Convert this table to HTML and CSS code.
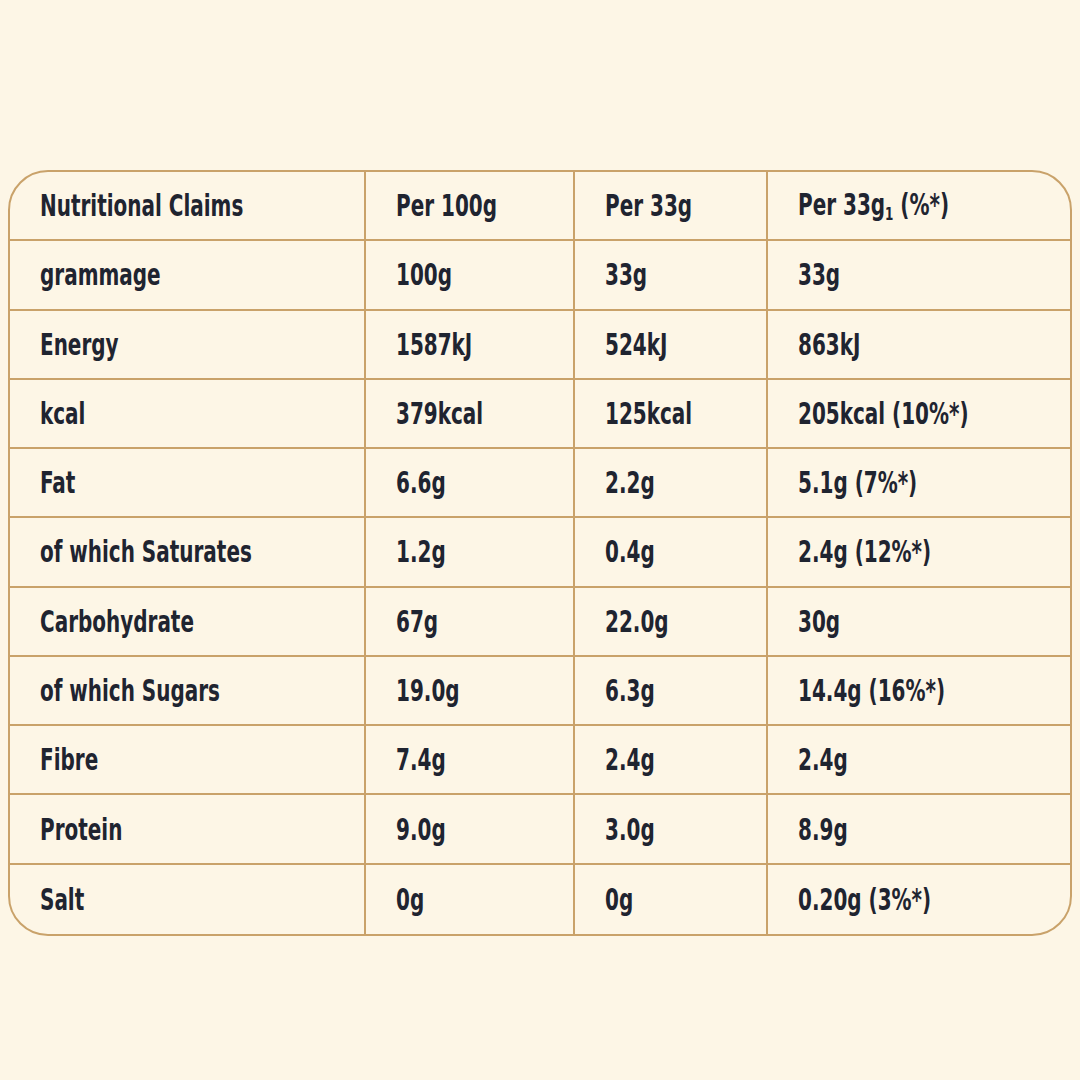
FILE: index.html
```html
<!DOCTYPE html>
<html>
<head>
<meta charset="utf-8">
<link rel="stylesheet" href="styles.css">
</head>
<body>
<div class="page">
  <div class="table">
    <div class="cell"><span class="t">Nutritional Claims</span></div><div class="cell"><span class="t">Per 100g</span></div><div class="cell"><span class="t">Per 33g</span></div><div class="cell"><span class="t">Per 33g<sub>1</sub> (%*)</span></div>
    <div class="cell"><span class="t">grammage</span></div><div class="cell"><span class="t">100g</span></div><div class="cell"><span class="t">33g</span></div><div class="cell"><span class="t">33g</span></div>
    <div class="cell"><span class="t">Energy</span></div><div class="cell"><span class="t">1587kJ</span></div><div class="cell"><span class="t">524kJ</span></div><div class="cell"><span class="t">863kJ</span></div>
    <div class="cell"><span class="t">kcal</span></div><div class="cell"><span class="t">379kcal</span></div><div class="cell"><span class="t">125kcal</span></div><div class="cell"><span class="t">205kcal (10%*)</span></div>
    <div class="cell"><span class="t">Fat</span></div><div class="cell"><span class="t">6.6g</span></div><div class="cell"><span class="t">2.2g</span></div><div class="cell"><span class="t">5.1g (7%*)</span></div>
    <div class="cell"><span class="t">of which Saturates</span></div><div class="cell"><span class="t">1.2g</span></div><div class="cell"><span class="t">0.4g</span></div><div class="cell"><span class="t">2.4g (12%*)</span></div>
    <div class="cell"><span class="t">Carbohydrate</span></div><div class="cell"><span class="t">67g</span></div><div class="cell"><span class="t">22.0g</span></div><div class="cell"><span class="t">30g</span></div>
    <div class="cell"><span class="t">of which Sugars</span></div><div class="cell"><span class="t">19.0g</span></div><div class="cell"><span class="t">6.3g</span></div><div class="cell"><span class="t">14.4g (16%*)</span></div>
    <div class="cell"><span class="t">Fibre</span></div><div class="cell"><span class="t">7.4g</span></div><div class="cell"><span class="t">2.4g</span></div><div class="cell"><span class="t">2.4g</span></div>
    <div class="cell"><span class="t">Protein</span></div><div class="cell"><span class="t">9.0g</span></div><div class="cell"><span class="t">3.0g</span></div><div class="cell"><span class="t">8.9g</span></div>
    <div class="cell"><span class="t">Salt</span></div><div class="cell"><span class="t">0g</span></div><div class="cell"><span class="t">0g</span></div><div class="cell"><span class="t">0.20g (3%*)</span></div>
  </div>
</div>
</body>
</html>
```
FILE: styles.css
```css
html, body {
  margin: 0;
  padding: 0;
  background: #fdf6e6;
}
.page {
  width: 1080px;
  height: 1080px;
  padding: 170px 8px 0 8px;
  box-sizing: border-box;
}
.table {
  box-sizing: border-box;
  width: 1064px;
  height: 766px;
  border: 2px solid #c9a26a;
  border-radius: 40px;
  overflow: hidden;
  display: grid;
  grid-template-columns: 356px 209px 193px 1fr;
  grid-template-rows: repeat(11, 1fr);
  font-family: "DejaVu Sans Condensed", "DejaVu Sans", sans-serif;
  font-weight: bold;
  font-size: 30px;
  color: #1f2430;
}
.cell {
  display: flex;
  align-items: center;
  padding-left: 30px;
  border-right: 2px solid #c9a26a;
  border-bottom: 2px solid #c9a26a;
  white-space: nowrap;
}
.t {
  display: inline-block;
  transform: scaleX(0.74);
  transform-origin: left center;
}
.cell:nth-child(4n) {
  border-right: none;
}
.cell:nth-last-child(-n+4) {
  border-bottom: none;
}
sub {
  font-size: 18px;
  vertical-align: -5px;
}
```
